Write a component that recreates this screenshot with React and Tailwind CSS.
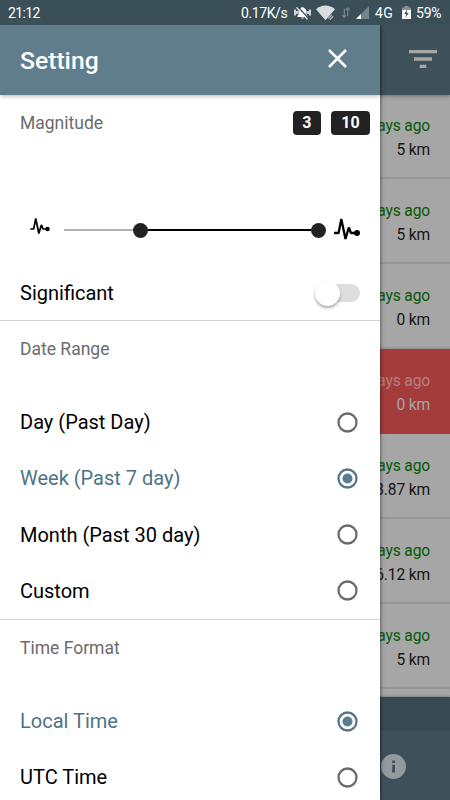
import React from "react"

const quakes = [
  { depth: "5 km" },
  { depth: "5 km" },
  { depth: "0 km" },
  { depth: "0 km", alert: true },
  { depth: "33.87 km" },
  { depth: "36.12 km" },
  { depth: "5 km" },
]

function StatusBar() {
  return (
    <div className="relative z-30 flex h-[25px] items-center justify-between bg-[#3b4f59] pl-2 pr-2 text-[14px] leading-none text-white">
      <span className="pt-px tracking-[-0.6px]">21:12</span>
      <div className="flex items-center">
        <span className="mr-[7px] w-[46px] whitespace-nowrap pt-px tracking-[-0.4px]">0.17K/s</span>
        <svg className="mr-[5px]" width="17" height="14" viewBox="0 0 17 14">
          <path d="M3.5 11V9.700l1-1V5.800C4.500 3.900 5.600 2.500 7.300 2.100V1.200h2.400v.9c1.700.4 2.800 1.800 2.800 3.700v2.900l1 1V11zM7.200 11.600h2.600c0 1.500-2.600 1.500-2.600 0z" fill="#fff" />
          <path d="M1 3.500v6M3 5v3M16 3.500v6M14 5v3" stroke="#fff" strokeWidth="1.500" />
          <path d="M3.600.5l11 12" stroke="#3b4f59" strokeWidth="1.300" />
          <path d="M2.500 1.400l11 12" stroke="#fff" strokeWidth="1.300" />
        </svg>
        <svg className="mr-[7px]" width="19" height="16" viewBox="0 0 19 16">
          <path d="M0 4.200C5.500-.6 13.500-.6 19 4.200L9.500 15.300z" fill="#d9dddf" />
          <path d="M12 13.500l4.500-4.500 2 1.700-4 4.500z" fill="#3b4f59" />
          <path d="M12.300 13.500l3.500-3.500M13.800 14.800l3.500-3.500" stroke="#a5afb4" strokeWidth="1.300" />
        </svg>
        <svg className="mr-[6px]" width="8" height="13" viewBox="0 0 8 13">
          <path d="M2.300 2.500V11M.3 9.200l2 2.200 2-2.200M5.700 10V2M3.700 4l2-2.200L7.700 4" fill="none" stroke="#75848b" strokeWidth="1.200" />
        </svg>
        <svg className="mr-[6px]" width="13" height="13" viewBox="0 0 13 13">
          <path d="M13 0v13H0z" fill="#75848b" />
          <path d="M5 8v5H0z" fill="#fff" />
        </svg>
        <span className="mr-[7px] w-5 pt-px tracking-[0.3px]">4G</span>
        <svg className="mr-[5px]" width="9" height="13" viewBox="0 0 9 13">
          <path d="M2.500 0h4v1.500H9V4H0V1.500h2.500z" fill="#87949b" />
          <path d="M0 4h9v9H0z" fill="#fff" />
          <path d="M5.300 3.500L2.200 8h2l-.8 3.500L6.800 7h-2z" fill="#3b4f59" />
        </svg>
        <span className="w-[26px] whitespace-nowrap pt-px tracking-[-0.2px]">59%</span>
      </div>
    </div>
  )
}

function Background() {
  return (
    <div className="absolute inset-x-0 bottom-0 top-[25px] flex flex-col bg-[#a6a6a6]">
      <div className="z-10 -mb-px flex h-[70px] shrink-0 items-center justify-end bg-[#3e515b] pb-[3px] pr-[13px] shadow-[0_1px_4px_rgba(0,0,0,0.35)]">
        <svg width="28" height="18" viewBox="0 0 28 18" fill="#a6a6a6">
          <path d="M0 0h28v3.300H0zM5 7.300h18v3.500H5zM10.700 14.700h6.600v3.300h-6.600z" />
        </svg>
      </div>
      {quakes.map((q, i) => (
        <div
          key={i}
          className={
            q.alert
              ? "flex h-[85px] shrink-0 flex-col items-end bg-[#a43c3c] pr-5 pt-5 text-[15.6px] leading-6 tracking-[-0.15px] text-[#a6a6a6]"
              : "flex h-[85px] shrink-0 flex-col items-end border-b-2 border-[#969696] pr-5 pt-5 text-[15.6px] leading-6 tracking-[-0.15px] text-[#151515]"
          }
        >
          <span className={q.alert ? "text-[#b47e82]" : "text-[#075907]"}>days ago</span>
          <span>{q.depth}</span>
        </div>
      ))}
      <div className="mt-2 h-[33px] shrink-0 border-b border-[#33454d] bg-[#384a51] shadow-[0_-1px_2px_rgba(0,0,0,0.25)]" />
      <div className="flex flex-1 justify-end bg-[#3e515b] pr-11 pt-[24px]">
        <div className="flex h-[25px] w-[25px] justify-center rounded-full bg-[#939a9e]">
          <svg width="25" height="25" viewBox="0 0 25 25" fill="#3e515b">
            <path d="M11.200 6.500h2.800v2.400h-2.800zM11.200 10.800h2.800v7.700h-2.800z" />
          </svg>
        </div>
      </div>
    </div>
  )
}

function Pulse({ className }) {
  return (
    <svg className={className} viewBox="0 0 26 24" fill="none">
      <path d="M0 16h4.600L7.300 2l4.200 20L14.800 10.500l2.200 5.500h5" stroke="#000" strokeWidth="2.300" strokeLinejoin="bevel" />
      <circle cx="23" cy="16" r="3" fill="#000" />
    </svg>
  )
}

function Radio({ checked }) {
  const color = checked ? "#527789" : "#6b6b6b"
  return (
    <svg width="21" height="21" viewBox="0 0 21 21" fill="none">
      <circle cx="10.500" cy="10.500" r="9" stroke={color} strokeWidth="2.300" />
      {checked && <circle cx="10.500" cy="10.500" r="5" fill="#5b7c8b" />}
    </svg>
  )
}

function Option({ label, checked }) {
  return (
    <div className="flex h-[56.25px] items-center justify-between pl-5 pr-[22px]">
      <span className={checked ? "text-[20px] text-[#4d7485]" : "text-[20px] text-black"}>{label}</span>
      <Radio checked={checked} />
    </div>
  )
}

function Drawer() {
  return (
    <div className="absolute bottom-0 left-0 top-[25px] z-20 w-[380px] bg-white shadow-[0_0_4px_rgba(0,0,0,0.7)]">
      <div className="relative flex h-[70px] items-center justify-between bg-[#607d8b] pl-5 pr-[33px] shadow-[0_1px_4px_rgba(0,0,0,0.3)]">
        <h1 className="pt-0.5 text-[24.7px] font-medium leading-8 text-white">Setting</h1>
        <svg className="mb-[3px]" width="19" height="19" viewBox="0 0 19 19">
          <path d="M1 1l17 17M18 1L1 18" stroke="#fff" strokeWidth="2.500" />
        </svg>
      </div>

      <section className="h-[226px] border-b border-[#d3d3d3]">
        <div className="flex items-start justify-between pl-5 pr-2.5 pt-4">
          <span className="text-[17.5px] leading-6 text-[#6b6b6b]">Magnitude</span>
          <div className="flex gap-2.5 text-base font-bold leading-[23px] text-white">
            <span className="h-6 w-[28.5px] rounded bg-[#222] text-center">3</span>
            <span className="h-6 w-[39px] rounded bg-[#222] text-center">10</span>
          </div>
        </div>

        <div className="mt-[77px] flex h-9 items-center pl-[30px] pr-5">
          <Pulse className="mb-2 h-[18px] w-[20px]" />
          <div className="ml-3.5 flex flex-1 items-center">
            <span className="h-0.5 flex-1 bg-[#b4b4b4]" />
            <span className="h-[15px] w-[15px] rounded-full bg-[#222]" />
            <span className="h-0.5 w-[163.5px] bg-black" />
            <span className="h-[15px] w-[15px] rounded-full bg-[#222]" />
          </div>
          <Pulse className="mb-0.5 ml-2 h-[24px] w-[26px]" />
        </div>

        <div className="mt-[26px] flex h-[38px] items-center justify-between pl-5 pr-5">
          <span className="text-[20px] text-black">Significant</span>
          <div className="flex h-[18px] w-[43px] items-center rounded-full bg-[#dedede]">
            <span className="-ml-0.5 h-[25px] w-[25px] shrink-0 rounded-full bg-white shadow-[0_2px_3px_rgba(0,0,0,0.35)]" />
          </div>
        </div>
      </section>

      <section className="h-[299px] border-b border-[#d3d3d3]">
        <h2 className="h-[73px] pl-5 pt-4 text-[17.5px] leading-6 text-[#6b6b6b]">Date Range</h2>
        <Option label="Day (Past Day)" />
        <Option label="Week (Past 7 day)" checked />
        <Option label="Month (Past 30 day)" />
        <Option label="Custom" />
      </section>

      <section>
        <h2 className="h-[73px] pl-5 pt-4 text-[17.5px] leading-6 text-[#6b6b6b]">Time Format</h2>
        <Option label="Local Time" checked />
        <Option label="UTC Time" />
      </section>
    </div>
  )
}

export default function App() {
  return (
    <div className="relative h-[800px] w-[450px] overflow-hidden font-['Roboto',sans-serif]">
      <StatusBar />
      <Background />
      <Drawer />
    </div>
  )
}
